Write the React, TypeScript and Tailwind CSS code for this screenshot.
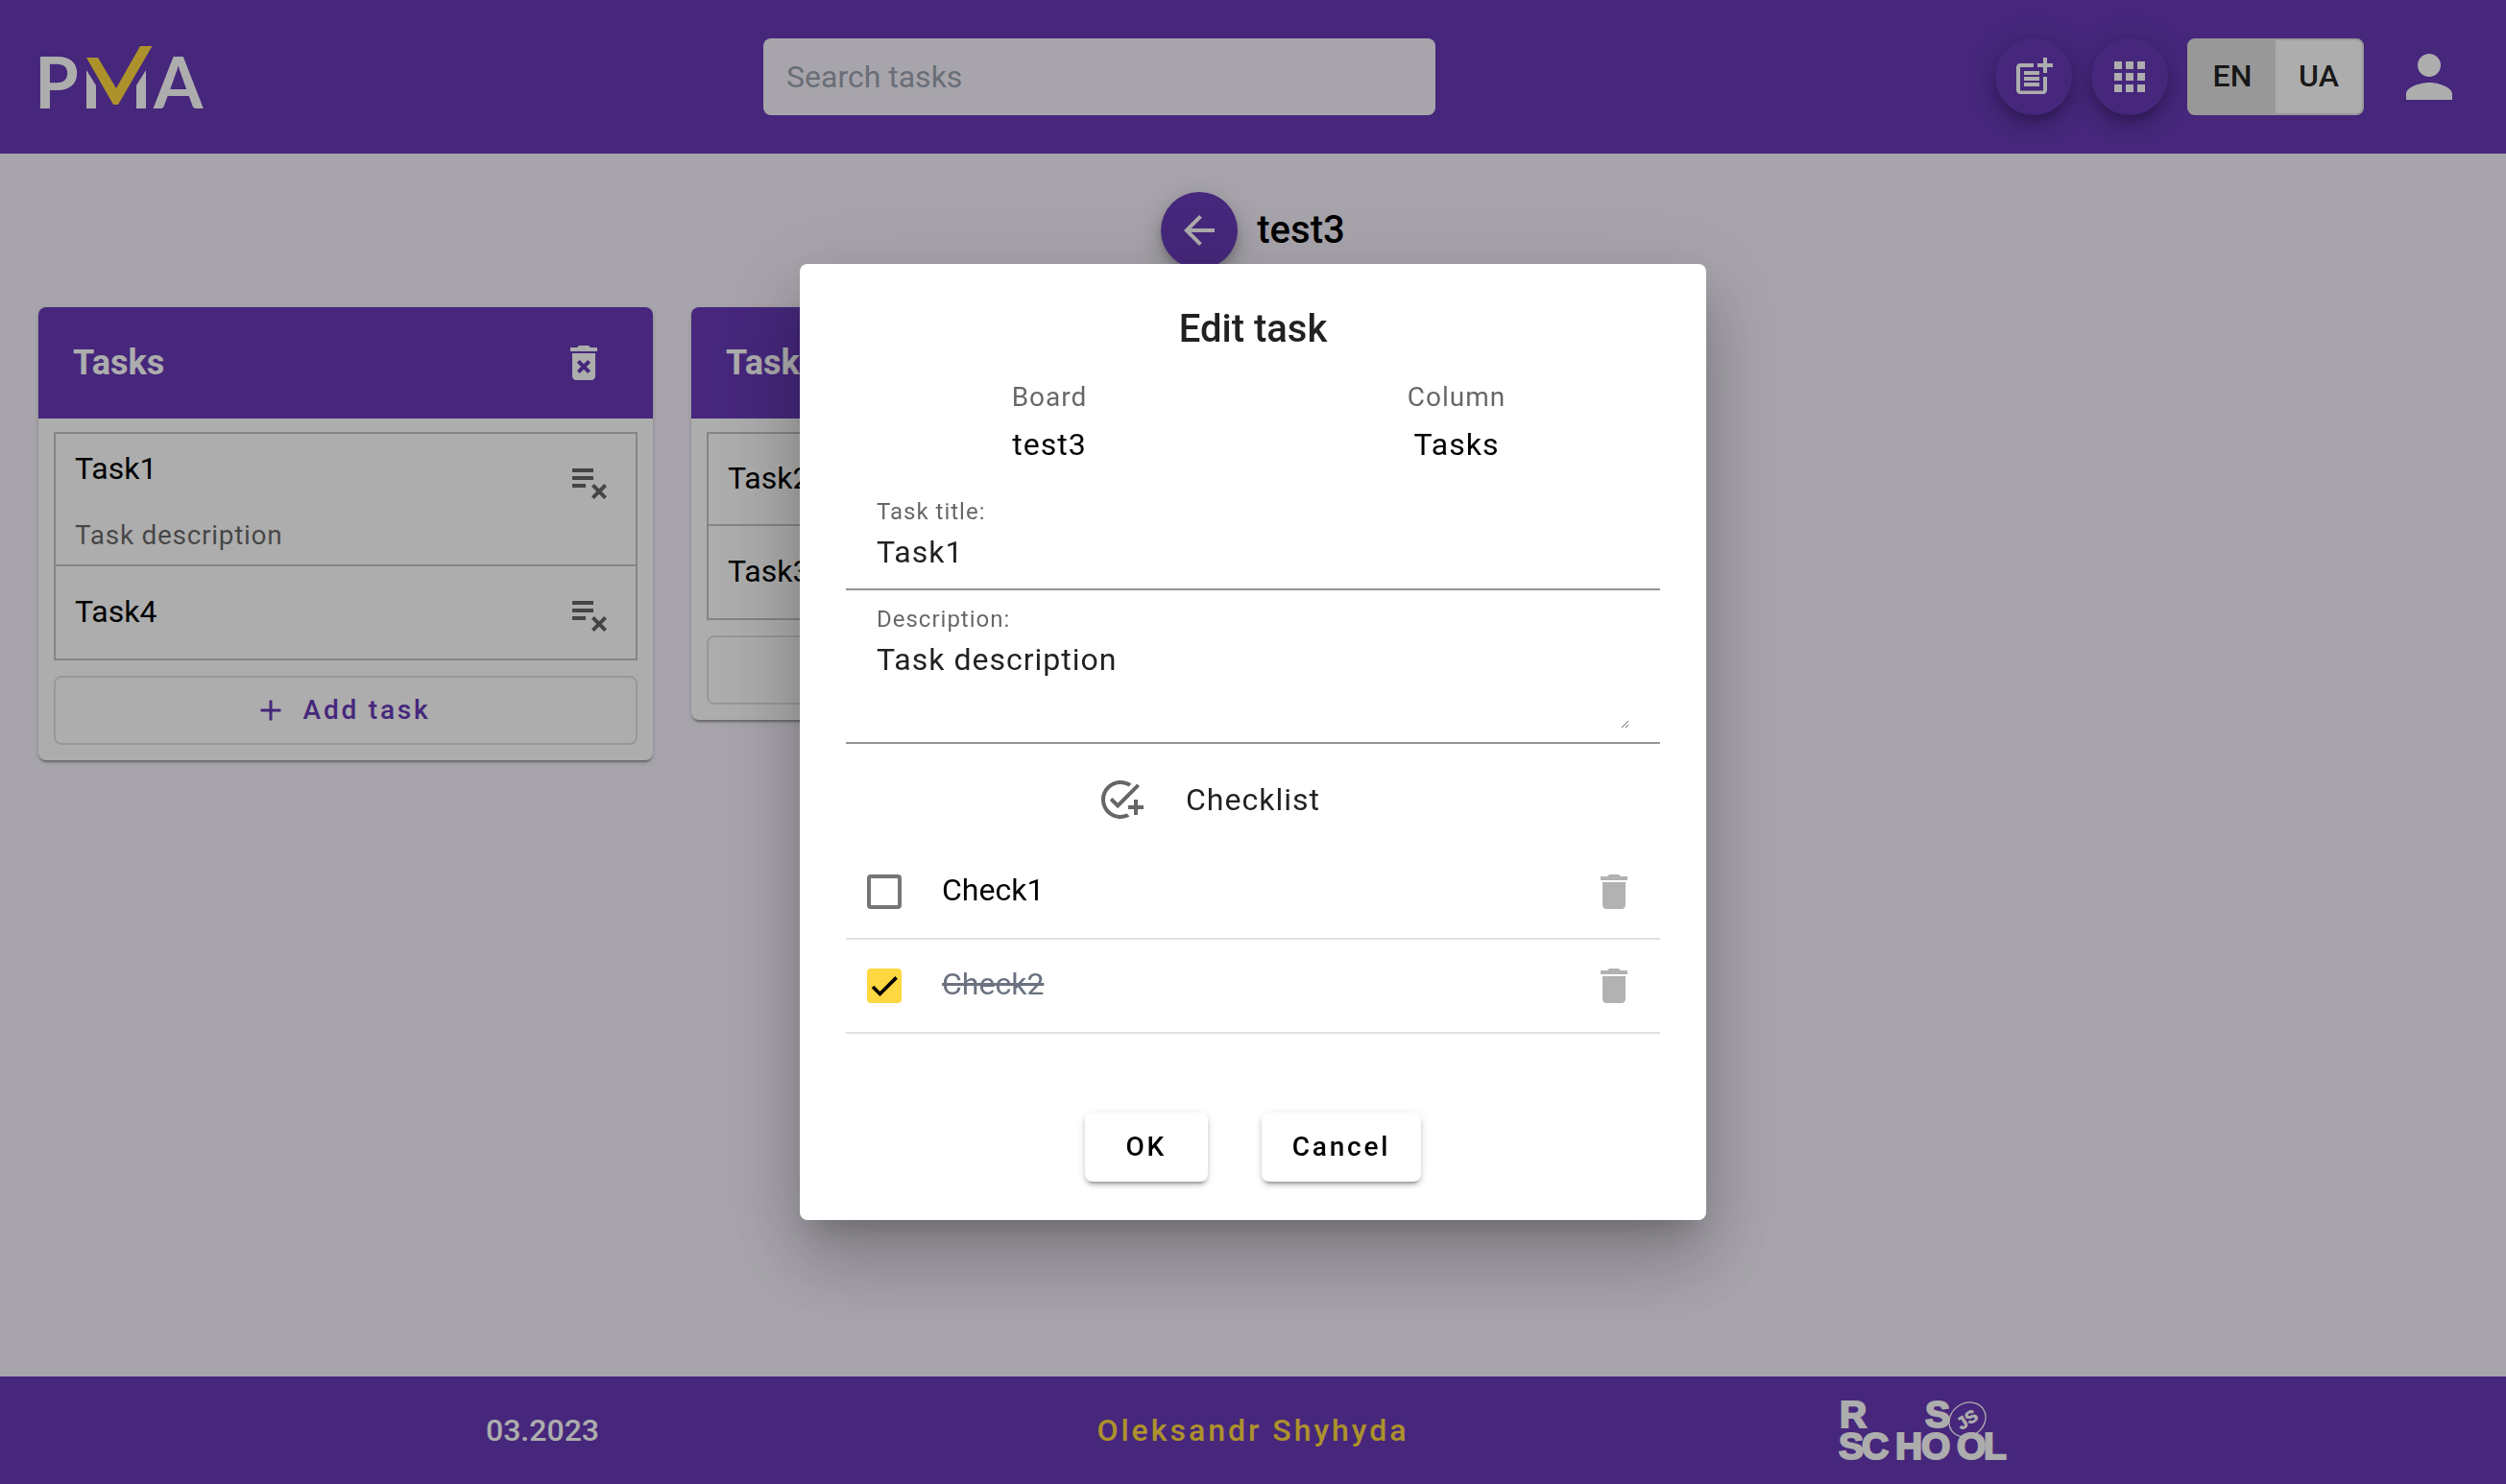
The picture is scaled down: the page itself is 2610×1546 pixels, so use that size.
import { useState } from "react";
import {
  MdAdd,
  MdAddTask,
  MdApps,
  MdArrowBack,
  MdDelete,
  MdDeleteForever,
  MdPerson,
  MdPlaylistRemove,
  MdPostAdd,
} from "react-icons/md";

type Task = { title: string; description?: string };
type Column = { title: string; tasks: Task[] };

const columns: Column[] = [
  {
    title: "Tasks",
    tasks: [{ title: "Task1", description: "Task description" }, { title: "Task4" }],
  },
  { title: "Tasks2", tasks: [{ title: "Task2" }, { title: "Task3" }] },
];

function PmaLogo() {
  return (
    <svg
      viewBox="40 40 172 80"
      className="h-20 w-[172px] overflow-visible"
      role="img"
      aria-label="PMA"
      fontFamily="Lato, sans-serif"
      fontWeight={700}
      fontSize={74}
      fill="#fff"
    >
      <text x="36" y="113">P</text>
      <polygon points="90,73 100,89 100,113 90,113" />
      <polygon points="152,73 142,89 142,113 152,113" />
      <polygon points="90,60 102,60 121,92 146,48 158.500,48 123,109 118,109" fill="#ffd740" />
      <text x="160" y="113">A</text>
    </svg>
  );
}

function SchoolLogo() {
  return (
    <svg
      viewBox="0 0 258 64"
      className="h-16 w-[258px] overflow-visible"
      role="img"
      aria-label="RS School"
      fontFamily="'Liberation Sans', sans-serif"
      fontWeight={700}
      fontSize={39}
      fill="#fff"
      stroke="#fff"
      strokeWidth="2"
    >
      <text x="0" y="29">R</text>
      <text x="89" y="29">S</text>
      <text x="-1" y="62">S</text>
      <text x="23" y="62">C</text>
      <text x="58" y="62">H</text>
      <text x="85" y="62">O</text>
      <text x="122" y="62">O</text>
      <text x="150" y="62">L</text>
      <ellipse
        cx="133"
        cy="21"
        rx="20"
        ry="17"
        transform="rotate(-35 133 21)"
        fill="none"
        strokeWidth="1.300"
      />
      <text
        x="133"
        y="27"
        fontSize="18"
        strokeWidth="0.700"
        textAnchor="middle"
        transform="rotate(-32 133 21)"
      >
        JS
      </text>
    </svg>
  );
}

const fab =
  "flex size-20 items-center justify-center rounded-full bg-[#673ab7] text-white shadow-[0_6px_10px_-2px_rgba(0,0,0,0.2),0_12px_20px_0_rgba(0,0,0,0.14),0_2px_36px_0_rgba(0,0,0,0.12)]";

function Header() {
  return (
    <header className="flex h-40 items-center justify-between bg-[#673ab7] px-10">
      <a href="#home">
        <PmaLogo />
      </a>
      <input
        type="search"
        aria-label="Search tasks"
        placeholder="Search tasks"
        className="h-20 w-[700px] rounded-lg bg-[#f7f3fd] px-6 text-[32px] text-black placeholder:text-[#9ca3af]"
      />
      <div className="flex items-center gap-5">
        <button type="button" aria-label="New board" className={fab}>
          <MdPostAdd className="size-12" />
        </button>
        <button type="button" aria-label="All boards" className={fab}>
          <MdApps className="size-12" />
        </button>
        <div className="flex h-20 overflow-hidden rounded-lg border-2 border-[#e0e0e0] bg-white text-[32px] font-medium text-black/87">
          <button type="button" aria-pressed="true" className="w-[90px] bg-[#e0e0e0] pb-0.5">
            EN
          </button>
          <button type="button" aria-pressed="false" className="w-[90px] pb-0.5">
            UA
          </button>
        </div>
        <button
          type="button"
          aria-label="Account"
          className="ml-2 flex size-20 items-center justify-center text-white"
        >
          <MdPerson className="size-[72px]" />
        </button>
      </div>
    </header>
  );
}

function TaskItem({ task }: { task: Task }) {
  return (
    <li className="flex min-h-24 items-start justify-between border-b-2 border-[#c4c4c4] pl-5 last:border-b-0">
      {task.description ? (
        <div className="pt-3 pb-2.5">
          <p className="text-[32px] leading-12">{task.title}</p>
          <p className="mt-[26px] text-[28px] leading-10 tracking-wide text-black/60">
            {task.description}
          </p>
        </div>
      ) : (
        <p className="self-center pb-0.5 text-[32px] leading-12">{task.title}</p>
      )}
      <button
        type="button"
        aria-label={`Remove ${task.title}`}
        className="-mb-0.5 flex size-24 items-center justify-center text-black/60"
      >
        <MdPlaylistRemove className="size-12" />
      </button>
    </li>
  );
}

function BoardColumn({ column }: { column: Column }) {
  return (
    <section className="w-[640px] overflow-hidden rounded-lg bg-white shadow-[0_4px_2px_-2px_rgba(0,0,0,0.2),0_2px_2px_0_rgba(0,0,0,0.14),0_2px_6px_0_rgba(0,0,0,0.12)]">
      <div className="flex h-[116px] items-center justify-between bg-[#673ab7] pr-8 pl-9 text-white">
        <h2 className="text-[36px] font-bold">{column.title}</h2>
        <button
          type="button"
          aria-label="Delete column"
          className="flex size-20 items-center justify-center"
        >
          <MdDeleteForever className="size-12" />
        </button>
      </div>
      <div className="px-4 pt-3.5 pb-4">
        <ul className="border-2 border-[#c4c4c4]">
          {column.tasks.map((task) => (
            <TaskItem key={task.title} task={task} />
          ))}
        </ul>
        <button
          type="button"
          className="mt-4 flex h-[72px] w-full items-center justify-center gap-4 rounded-lg border-2 border-[#e0e0e0] pr-2 text-[28px] font-medium tracking-widest text-[#673ab7]"
        >
          <MdAdd className="size-9" />
          Add task
        </button>
      </div>
    </section>
  );
}

function Footer() {
  return (
    <footer className="grid h-28 grid-cols-3 items-center justify-items-center bg-[#673ab7] px-[195px] text-[32px] font-medium">
      <p className="text-white">03.2023</p>
      <a href="#author" className="tracking-[3px] text-[#ffd740]">
        Oleksandr Shyhyda
      </a>
      <a href="#school">
        <SchoolLogo />
      </a>
    </footer>
  );
}

function CheckItem({ name, initial }: { name: string; initial: boolean }) {
  const [done, setDone] = useState(initial);
  return (
    <li className="flex h-[98px] items-center justify-between border-b-2 border-[#e0e0e0] pr-6 pl-[22px]">
      <label className="flex items-center">
        <span className="relative flex size-9">
          <input
            type="checkbox"
            checked={done}
            onChange={(event) => setDone(event.target.checked)}
            className="size-9 appearance-none rounded-sm border-4 border-[#757575] checked:border-[#ffd740] checked:bg-[#ffd740]"
          />
          {done && (
            <svg
              viewBox="0 0 24 24"
              className="pointer-events-none absolute inset-1 size-7"
              fill="none"
              stroke="#000"
              strokeWidth="3.130"
            >
              <path d="M1.730 12.910 8.100 19.280 22.790 4.590" />
            </svg>
          )}
        </span>
        <span
          className={
            done
              ? "pb-1 pl-[42px] text-[32px] text-[#6b7280] line-through"
              : "pb-1 pl-[42px] text-[32px] text-black"
          }
        >
          {name}
        </span>
      </label>
      <button type="button" aria-label={`Delete ${name}`} className="text-black/30">
        <MdDelete className="size-12" />
      </button>
    </li>
  );
}

const dialogButton =
  "h-[72px] min-w-32 rounded-lg bg-white px-8 text-[28px] font-medium tracking-widest text-black shadow-[0_6px_2px_-4px_rgba(0,0,0,0.2),0_4px_4px_0_rgba(0,0,0,0.14),0_2px_10px_0_rgba(0,0,0,0.12)]";

function EditDialog() {
  return (
    <div className="fixed inset-0 flex items-center justify-center bg-black/32">
      <form
        role="dialog"
        aria-labelledby="dialog-title"
        className="w-[944px] rounded-lg bg-white px-12 pt-[34px] pb-10 shadow-[0_22px_30px_-14px_rgba(0,0,0,0.2),0_48px_76px_6px_rgba(0,0,0,0.14),0_18px_92px_16px_rgba(0,0,0,0.12)]"
      >
        <h2
          id="dialog-title"
          className="text-center text-[40px] leading-[68px] font-medium text-black/87"
        >
          Edit task
        </h2>
        <dl className="mt-3 grid grid-cols-2 text-center tracking-[1px]">
          <div>
            <dt className="text-[28px] leading-[50px] text-black/60">Board</dt>
            <dd className="text-[32px] leading-12 text-black">test3</dd>
          </div>
          <div>
            <dt className="text-[28px] leading-[50px] text-black/60">Column</dt>
            <dd className="text-[32px] leading-12 text-black">Tasks</dd>
          </div>
        </dl>
        <div className="mt-4 border-b-2 border-black/42 px-8 pb-3.5 tracking-[1px]">
          <label htmlFor="task-title" className="block h-12 pt-4 text-[24px] leading-7 text-black/60">
            Task title:
          </label>
          <input
            id="task-title"
            defaultValue="Task1"
            className="block h-12 w-full text-[32px] tracking-[1px] text-black/87 outline-none"
          />
        </div>
        <div className="border-b-2 border-black/42 px-8 pb-3.5 tracking-[1px]">
          <label
            htmlFor="task-description"
            className="block h-12 pt-4 text-[24px] leading-7 text-black/60"
          >
            Description:
          </label>
          <textarea
            id="task-description"
            rows={2}
            defaultValue="Task description"
            className="block h-24 w-full resize text-[32px] leading-12 tracking-[1px] text-black/87 outline-none"
          />
        </div>
        <div className="mt-2.5 grid grid-cols-[1fr_auto_1fr] items-center gap-5">
          <button
            type="button"
            aria-label="Add check"
            className="flex size-24 items-center justify-center justify-self-end text-black/60"
          >
            <MdAddTask className="size-12" />
          </button>
          <h3 className="text-[32px] tracking-[1px] text-black/87">Checklist</h3>
        </div>
        <ul>
          <CheckItem name="Check1" initial={false} />
          <CheckItem name="Check2" initial={true} />
        </ul>
        <div className="mt-[82px] flex justify-center gap-14">
          <button type="button" className={dialogButton}>
            OK
          </button>
          <button type="button" className={dialogButton}>
            Cancel
          </button>
        </div>
      </form>
    </div>
  );
}

export default function App() {
  return (
    <div className="flex min-h-screen flex-col bg-[#f7f3fd] font-[Roboto,sans-serif] text-black">
      <Header />
      <main className="flex-1">
        <div className="flex items-center justify-center gap-5 py-10">
          <button type="button" aria-label="Back" className={fab}>
            <MdArrowBack className="size-12" />
          </button>
          <h1 className="text-[40px] font-medium">test3</h1>
        </div>
        <div className="flex items-start gap-10 px-10">
          {columns.map((column) => (
            <BoardColumn key={column.title} column={column} />
          ))}
        </div>
      </main>
      <Footer />
      <EditDialog />
    </div>
  );
}
